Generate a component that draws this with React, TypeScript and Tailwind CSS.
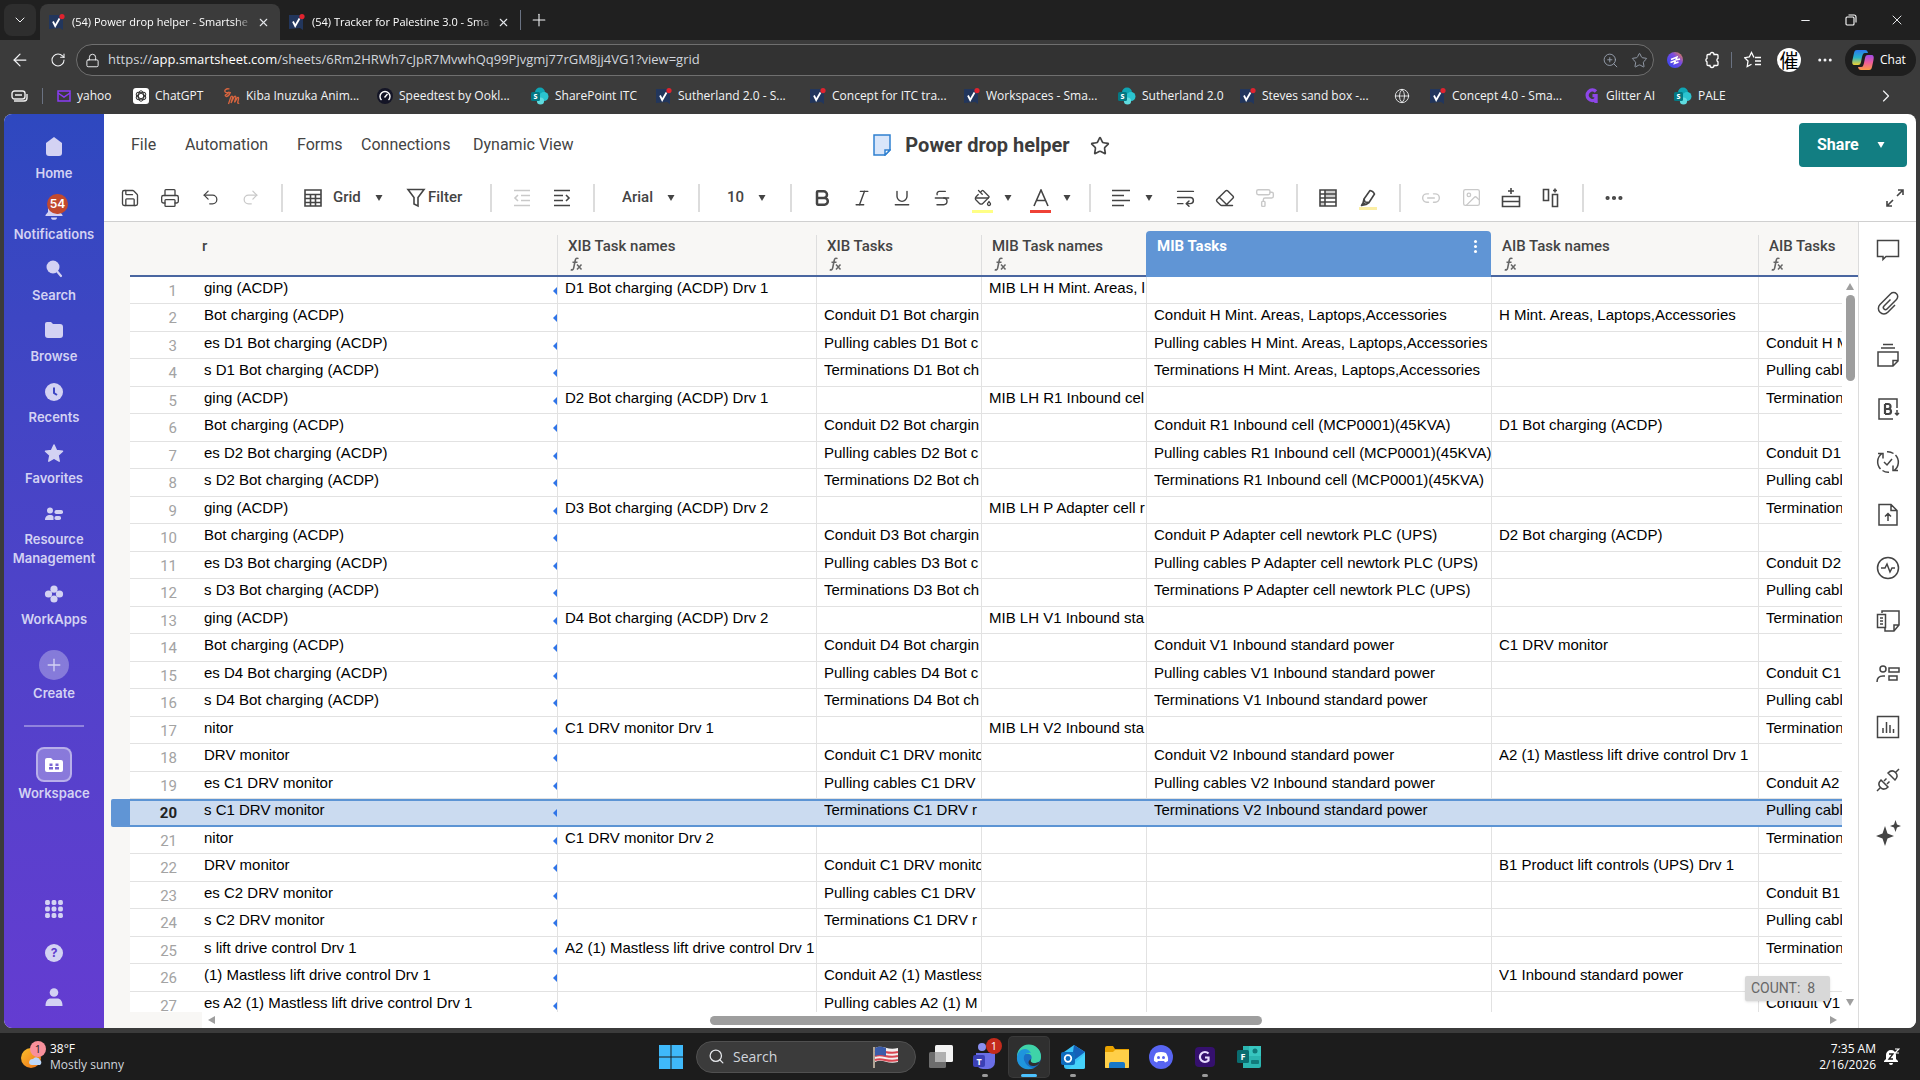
import React from 'react';
import {
  ArrowLeft,
  Bold,
  ChevronDown,
  ChevronRight,
  Ellipsis,
  Eraser,
  Globe,
  Image,
  Italic,
  Link2,
  Lock,
  Minus,
  PaintBucket,
  PaintRoller,
  Plus,
  Printer,
  Redo2,
  RotateCw,
  Save,
  Search,
  Star,
  Strikethrough,
  Underline,
  Undo2,
  WrapText,
  X,
  ZoomIn,
} from 'lucide-react';

const uiFont = "font-['Open_Sans','Noto_Sans',sans-serif]";

/* ---------- Logos ---------- */

const SmartsheetLogo: React.FC = () => (
  <svg width="16" height="16" viewBox="0 0 16 16" className="shrink-0">
    <path d="M0 1h14v15l-3-2-11 1z" fill="#22365c" />
    <path d="M4 7.500L6.200 12 10.500 4.500" fill="none" stroke="#fff" strokeWidth="1.8" />
    <circle cx="13" cy="2.6" r="2.6" fill="#e0232e" />
  </svg>
);

const SharePointLogo: React.FC = () => (
  <svg width="18" height="18" viewBox="0 0 18 18" className="shrink-0">
    <circle cx="9" cy="5.5" r="5" fill="#0fa5b4" />
    <circle cx="13" cy="9.5" r="4.5" fill="#2bc4d0" />
    <circle cx="9.5" cy="14" r="3.6" fill="#5fdce0" />
    <rect x="0" y="5" width="9" height="9" rx="1.5" fill="#047883" />
    <text x="4.5" y="12.4" fontSize="8" fontWeight="700" fill="#fff" textAnchor="middle" fontFamily="Open Sans">
      s
    </text>
  </svg>
);

const YahooLogo: React.FC = () => (
  <svg width="14" height="12" viewBox="0 0 14 12" fill="none" stroke="#8a3df5" strokeWidth="1.5" className="shrink-0">
    <path d="M1 1h12v10H1z" />
    <path d="M1 3l6 4 6-4" />
  </svg>
);

const ChatGptLogo: React.FC = () => (
  <svg width="16" height="16" viewBox="0 0 16 16" className="shrink-0">
    <rect width="16" height="16" rx="3" fill="#fff" />
    <g fill="none" stroke="#333" strokeWidth="1">
      <ellipse cx="8" cy="8" rx="2.6" ry="5.2" />
      <ellipse cx="8" cy="8" rx="2.6" ry="5.2" transform="rotate(60 8 8)" />
      <ellipse cx="8" cy="8" rx="2.6" ry="5.2" transform="rotate(120 8 8)" />
    </g>
  </svg>
);

const KibaLogo: React.FC = () => (
  <svg width="17" height="17" viewBox="0 0 17 17" fill="none" stroke="#d9653f" strokeWidth="1.3" className="shrink-0">
    <path d="M6.500 1C3 0 .5 3 2.500 4.300S7 3 5.500 4.800 1.500 6.500 2.500 8s4-.5 5-4" />
    <path d="M5.500 16l2.300-7c1.500-1.500 2.200-.5 1.700 1L8 15l3-6c1.500-1.500 2.200-.5 1.700 1L11.500 14.500 14.500 9.500c1.200-.5 1.200.5 1 1.500l-.8 3.500c0 1 .8 1 1.500.5" />
  </svg>
);

const SpeedtestLogo: React.FC = () => (
  <svg width="16" height="16" viewBox="0 0 16 16" className="shrink-0">
    <circle cx="8" cy="8" r="8" fill="#141526" />
    <path d="M4.500 12a5 5 0 1 1 7 0M7.500 9.500l3-3.500" fill="none" stroke="#fff" strokeWidth="1.400" />
  </svg>
);

const GlitterLogo: React.FC = () => (
  <svg width="16" height="18" viewBox="0 0 16 18" fill="none" stroke="#8d46e8" strokeWidth="3.400" className="shrink-0">
    <path d="M12 4.500A5.200 5.200 0 1 0 12 12V8.600H8.500M12 10v6" />
  </svg>
);

const CopilotLogo: React.FC = () => (
  <svg width="22" height="22" viewBox="0 0 22 22" className="shrink-0">
    <defs>
      <linearGradient id="cpA" x1="0" y1="0" x2="0" y2="1">
        <stop offset="0" stopColor="#2a78ee" />
        <stop offset="0.5" stopColor="#28b3c9" />
        <stop offset="1" stopColor="#f2d22e" />
      </linearGradient>
      <linearGradient id="cpB" x1="0" y1="0" x2="0" y2="1">
        <stop offset="0" stopColor="#a14be8" />
        <stop offset="0.5" stopColor="#ee5d9a" />
        <stop offset="1" stopColor="#fb9b45" />
      </linearGradient>
    </defs>
    <path d="M5 1h8c2 0 2.500 1 3 3H13c-2 0-2 1-3 4l-1 5c-.5 2-1 3-3 3H3c-3 0-3-2-2.500-5L2 4c.5-2 1-3 3-3z" fill="url(#cpA)" />
    <path d="M17 21H9c-2 0-2.500-1-3-3h3c2 0 2-1 3-4l1-5c.5-2 1-3 3-3h3c3 0 3 2 2.500 5L20 18c-.5 2-1 3-3 3z" fill="url(#cpB)" />
  </svg>
);

/* ---------- Browser chrome ---------- */

const Tab: React.FC<{ title: string; active?: boolean }> = ({ title, active }) => (
  <div className={`flex items-center h-9 w-[240px] pl-[9px] pr-[10px] rounded-t-lg ${active ? 'bg-[#3b3b3b]' : ''}`}>
    <SmartsheetLogo />
    <span className="ml-[7px] w-[184px] overflow-hidden whitespace-nowrap text-[11px] text-white mask-r-from-90%">{title}</span>
    <button aria-label="Close tab" className="ml-1 text-gray-200">
      <X size={13} strokeWidth={2} />
    </button>
  </div>
);

const bookmarks = [
  { label: 'yahoo', width: 'w-[76px]', icon: <YahooLogo /> },
  { label: 'ChatGPT', width: 'w-[90px]', icon: <ChatGptLogo /> },
  { label: 'Kiba Inuzuka Anim...', width: 'w-[154px]', icon: <KibaLogo /> },
  { label: 'Speedtest by Ookl...', width: 'w-[154px]', icon: <SpeedtestLogo /> },
  { label: 'SharePoint ITC', width: 'w-[125px]', icon: <SharePointLogo /> },
  { label: 'Sutherland 2.0 - S...', width: 'w-[154px]', icon: <SmartsheetLogo /> },
  { label: 'Concept for ITC tra...', width: 'w-[154px]', icon: <SmartsheetLogo /> },
  { label: 'Workspaces - Sma...', width: 'w-[154px]', icon: <SmartsheetLogo /> },
  { label: 'Sutherland 2.0', width: 'w-[122px]', icon: <SharePointLogo /> },
  { label: 'Steves sand box -...', width: 'w-[154px]', icon: <SmartsheetLogo /> },
  { label: '', width: 'w-[36px]', icon: <Globe size={16} strokeWidth={1.3} className="shrink-0" /> },
  { label: 'Concept 4.0 - Sma...', width: 'w-[154px]', icon: <SmartsheetLogo /> },
  { label: 'Glitter AI', width: 'w-[90px]', icon: <GlitterLogo /> },
  { label: 'PALE', width: 'w-[76px]', icon: <SharePointLogo /> },
];

const Browser: React.FC = () => (
  <header className={`text-gray-100 ${uiFont}`}>
    <div className="flex items-end h-10 bg-[#202020]">
      <button aria-label="Tab actions" className="flex items-center justify-center ml-1 mr-1 mb-1 h-8 w-8 rounded-lg bg-[#2e2e2e]">
        <ChevronDown size={16} strokeWidth={1.5} />
      </button>
      <Tab title="(54) Power drop helper - Smartshe" active />
      <Tab title="(54) Tracker for Palestine 3.0 - Sma" />
      <div className="h-5 w-px mb-[10px] bg-gray-500" />
      <button aria-label="New tab" className="ml-2 mb-[10px]">
        <Plus size={20} strokeWidth={1.3} />
      </button>
      <div className="flex ml-auto h-10">
        <button aria-label="Minimize" className="flex items-center justify-center w-[46px]">
          <Minus size={13} strokeWidth={1.8} />
        </button>
        <button aria-label="Restore" className="flex items-center justify-center w-[46px]">
          <svg width="12" height="12" viewBox="0 0 12 12" fill="none" stroke="#fff" strokeWidth="1.1">
            <rect x="1" y="3" width="8" height="8" rx="1" />
            <path d="M3.500 1H9a2 2 0 0 1 2 2v5.500" />
          </svg>
        </button>
        <button aria-label="Close" className="flex items-center justify-center w-[46px]">
          <X size={16} strokeWidth={1.4} />
        </button>
      </div>
    </div>

    <div className="flex items-end h-9">
      <button aria-label="Back" className="flex items-center justify-center w-10 h-8">
        <ArrowLeft size={20} strokeWidth={1.5} />
      </button>
      <button aria-label="Refresh" className="flex items-center justify-center w-9 h-8">
        <RotateCw size={16} strokeWidth={1.6} />
      </button>
      <div className="flex items-center flex-1 h-8 pl-2 pr-[5px] rounded-full border border-[#6f6f6f] bg-[#323232]">
        <Lock size={15} strokeWidth={1.5} />
        <p className="flex-1 ml-2 text-[13px] text-gray-300">
          https://<span className="text-white">app.smartsheet.com</span>/sheets/6Rm2HRWh7cJpR7MvwhQq99Pjvgmj77rGM8jj4VG1?view=grid
        </p>
        <ZoomIn size={17} strokeWidth={1.3} className="mr-3 text-gray-400" />
        <Star size={17} strokeWidth={1.3} className="text-gray-400" />
      </div>
      <div className="flex items-center h-8">
        <svg width="16" height="16" viewBox="0 0 16 16" className="ml-[13px]">
          <defs>
            <linearGradient id="ball" x1="0" y1="1" x2="1" y2="0">
              <stop offset="0" stopColor="#2945f5" />
              <stop offset="0.6" stopColor="#7b4be0" />
              <stop offset="1" stopColor="#f58a3b" />
            </linearGradient>
          </defs>
          <circle cx="8" cy="8" r="8" fill="url(#ball)" />
          <path d="M4 7.500l6-2.500-1 3 4-1M3.500 10.500l5-2-1 3 4-1.500" fill="none" stroke="#fff" strokeWidth="1.500" />
        </svg>
        <svg width="18" height="18" viewBox="0 0 18 18" fill="none" stroke="#fff" strokeWidth="1.300" className="ml-[20px]">
          <path d="M5 3.500h2a2 2 0 0 1 4 0h3a1 1 0 0 1 1 1v2.800a2 2 0 0 0 0 3.600v2.600a1 1 0 0 1-1 1h-3a2 2 0 0 1-4 0H5a1 1 0 0 1-1-1v-2.600a2 2 0 0 1 0-3.600V4.500a1 1 0 0 1 1-1z" />
        </svg>
        <div className="ml-[10px] h-4 w-px bg-gray-500" />
        <svg width="18" height="18" viewBox="0 0 18 18" fill="none" stroke="#fff" strokeWidth="1.300" className="ml-3">
          <path d="M10 6.500L7.500 1.500 5.300 6l-4.600.7L4 10l-.8 5.500 4.300-2.300M11 6.500h6M11 10h6M11 13.500h6" />
        </svg>
        <div className="flex items-center justify-center ml-[15px] h-6 w-6 rounded-full bg-white text-[19px] leading-6 text-black font-['Noto_Sans_CJK_SC',sans-serif]">
          催
        </div>
        <Ellipsis size={18} className="ml-[15px]" />
        <button className="flex items-center ml-[11px] mr-1 h-8 w-[71px] pl-[7px] gap-[6px] rounded-full bg-[#1e1e1e] text-xs text-white">
          <CopilotLogo />
          Chat
        </button>
      </div>
    </div>

    <nav className="flex items-center h-[38px] pt-[2px] text-xs">
      <svg width="18" height="12" viewBox="0 0 18 12" fill="none" stroke="#eee" strokeWidth="1.400" className="ml-[11px]">
        <rect x="1" y="1" width="13" height="8" rx="2.500" />
        <path d="M4 5h7M3 11h10a3 3 0 0 0 3-3V4" />
      </svg>
      <div className="ml-[13px] mr-[14px] h-4 w-px bg-gray-500" />
      {bookmarks.map((b, i) => (
        <a key={i} href="#" aria-label={b.label || 'Saved page'} className={`flex items-center gap-[6px] whitespace-nowrap ${b.width}`}>
          {b.icon}
          {b.label}
        </a>
      ))}
      <ChevronRight size={20} strokeWidth={1.4} className="ml-auto mr-6" />
    </nav>
  </header>
);

/* ---------- Left sidebar ---------- */

const NavItem: React.FC<{ label: string; children: React.ReactNode }> = ({ label, children }) => (
  <a href="#" className="flex flex-col items-center mb-[13px] text-center">
    <svg width="24" height="24" viewBox="0 0 24 24" fill="currentColor">
      {children}
    </svg>
    <span className="mt-[5px] leading-[19px]">{label}</span>
  </a>
);

const Sidebar: React.FC = () => (
  <aside className="flex flex-col w-[100px] shrink-0 pt-[21px] bg-linear-to-b from-[#2e48bf] to-[#643cd1] text-[13px] font-semibold text-[#d3d2f3] font-[Inter,sans-serif]">
    <NavItem label="Home">
      <path d="M12 2l8 6v10a3 3 0 0 1-3 3H7a3 3 0 0 1-3-3V8z" />
    </NavItem>
    <div className="relative">
      <NavItem label="Notifications">
        <path d="M12 5a6 6 0 0 1 6 6v5l2.500 3v1h-17v-1L6 16v-5a6 6 0 0 1 6-6zM9 21.500h6a3 2.300 0 0 1-6 0z" />
      </NavItem>
      <span className="absolute left-[43px] -top-[2px] flex items-center justify-center h-5 w-[21px] rounded-full bg-[#c1492e] text-xs text-white">
        54
      </span>
    </div>
    <NavItem label="Search">
      <circle cx="11" cy="10" r="6.500" />
      <path d="M14 13l5 6" stroke="currentColor" strokeWidth="2.200" strokeLinecap="round" />
    </NavItem>
    <NavItem label="Browse">
      <path d="M3 6a2 2 0 0 1 2-2h4l2 2h7a3 3 0 0 1 3 3v8a3 3 0 0 1-3 3H6a3 3 0 0 1-3-3z" />
    </NavItem>
    <NavItem label="Recents">
      <circle cx="12" cy="13" r="9" />
      <path d="M12 8.500V14l3 2" fill="none" stroke="#3d46c4" strokeWidth="2" />
    </NavItem>
    <NavItem label="Favorites">
      <path
        d="M12 5l2.500 5.500 6 .7-4.400 4.100 1.100 5.900L12 18.200l-5.200 3 1.100-5.900-4.400-4.100 6-.7z"
        stroke="currentColor"
        strokeWidth="1.500"
        strokeLinejoin="round"
      />
    </NavItem>
    <NavItem label="Resource Management">
      <circle cx="8" cy="9.500" r="3" />
      <path d="M3 19c0-3.500 2-5 5-5 2 0 3.500.6 3.500 2v3z" />
      <rect x="12.500" y="9" width="8.500" height="4" rx="1.800" />
      <rect x="12.500" y="15" width="6.500" height="4" rx="1.800" />
    </NavItem>
    <NavItem label="WorkApps">
      <circle cx="12" cy="8.200" r="3.600" />
      <circle cx="12" cy="18" r="3.600" />
      <circle cx="6.500" cy="13" r="3.600" />
      <circle cx="17.500" cy="13" r="3.600" />
    </NavItem>
    <button className="flex flex-col items-center mt-2">
      <span className="flex items-center justify-center h-[30px] w-[30px] rounded-full bg-white/30">
        <Plus size={20} strokeWidth={1.6} />
      </span>
      <span className="mt-[4px] leading-[19px]">Create</span>
    </button>
    <div className="mx-5 mt-[22px] h-[2px] bg-white/35" />
    <a href="#" className="flex flex-col items-center mt-[20px]">
      <span className="flex items-center justify-center h-[35px] w-9 rounded-lg border-2 border-white/40 bg-white/30">
        <svg width="20" height="16" viewBox="0 0 20 16">
          <path d="M1 3a2 2 0 0 1 2-2h4l2 2h8a2 2 0 0 1 2 2v8a2 2 0 0 1-2 2H3a2 2 0 0 1-2-2z" fill="#fff" />
          <path d="M5.500 6.500h3V9h-3zM11.500 6.500h3V9h-3zM5 10h4v2.500H5zM11 10h4v2.500h-4z" fill="#7a67d3" />
        </svg>
      </span>
      <span className="mt-[2px] leading-[19px]">Workspace</span>
    </a>
    <div className="flex flex-col items-center gap-5 mt-auto mb-[19px]">
      <button aria-label="Apps">
        <svg width="24" height="24" viewBox="0 0 24 24" fill="currentColor">
          {[5.5, 12, 18.5].map((y) => [5.5, 12, 18.5].map((x) => <rect key={`${x}-${y}`} x={x - 2.4} y={y - 2.4} width="4.800" height="4.800" rx="1.600" />))}
        </svg>
      </button>
      <button aria-label="Help" className="flex h-6 w-6 items-center justify-center">
        <span className="flex h-[18px] w-[18px] items-center justify-center rounded-full bg-[#d3d2f3] text-xs font-bold text-[#5f3ccd]">?</span>
      </button>
      <button aria-label="Account">
        <svg width="24" height="24" viewBox="0 0 24 24" fill="currentColor">
          <circle cx="12" cy="7.500" r="4.300" />
          <path d="M3.500 21c0-5 2-7.500 5.500-7.500h6c3.500 0 5.500 2.500 5.500 7.500z" />
        </svg>
      </button>
    </div>
  </aside>
);

/* ---------- Toolbar ---------- */

const Divider: React.FC = () => (
  <div className="flex justify-center w-[23px] shrink-0">
    <div className="h-7 w-[2px] bg-[#dcdcdc]" />
  </div>
);

const Tool: React.FC<{ label: string; disabled?: boolean; children: React.ReactNode }> = ({ label, disabled, children }) => (
  <button aria-label={label} disabled={disabled} className="flex items-center justify-center w-10 h-8 shrink-0 disabled:text-[#c9c9c9]">
    {children}
  </button>
);

const Caret: React.FC<{ className?: string }> = ({ className = '' }) => (
  <svg width="8" height="6" viewBox="0 0 8 6" fill="currentColor" className={`shrink-0 ${className}`}>
    <path d="M0.500 0h7L4 6z" />
  </svg>
);

const Svg20: React.FC<{ children: React.ReactNode }> = ({ children }) => (
  <svg width="20" height="20" viewBox="0 0 20 20" fill="none" stroke="currentColor" strokeWidth="1.600" className="shrink-0">
    {children}
  </svg>
);

const Toolbar: React.FC = () => (
  <div className="flex items-center h-[47px] pl-[6px] text-[15px] font-medium text-[#444]">
    <Tool label="Save"><Save size={20} strokeWidth={1.6} /></Tool>
    <Tool label="Print"><Printer size={20} strokeWidth={1.6} /></Tool>
    <Tool label="Undo"><Undo2 size={19} strokeWidth={1.6} /></Tool>
    <Tool label="Redo" disabled><Redo2 size={19} strokeWidth={1.6} /></Tool>
    <Divider />
    <button className="flex items-center w-[106px] h-8 pl-[10px]">
      <Svg20>
        <path d="M2 2h16v16H2zM2 6.500h16M2 10.500h16M2 14.500h16M7.500 6.500V18M12.500 6.500V18" />
      </Svg20>
      <span className="ml-[10px] w-[42px] text-left">Grid</span>
      <Caret />
    </button>
    <button className="flex items-center w-20 h-8 pl-[7px]">
      <Svg20>
        <path d="M2 1.500h16l-6 8V18l-4-2V9.500z" />
      </Svg20>
      <span className="ml-[2px]">Filter</span>
    </button>
    <Divider />
    <Tool label="Outdent" disabled>
      <Svg20><path d="M2 2.500h16M9 7.500h9M9 12.500h9M2 17.500h16M6 7L3 10l3 3" /></Svg20>
    </Tool>
    <Tool label="Indent">
      <Svg20><path d="M2 2.500h16M2 7.500h9M2 12.500h9M2 17.500h16M14 7l3 3-3 3" /></Svg20>
    </Tool>
    <Divider />
    <div className="flex items-center w-[82px]">
      <select aria-label="Font" className="appearance-none w-[62px] pl-[17px]">
        <option>Arial</option>
      </select>
      <Caret />
    </div>
    <Divider />
    <div className="flex items-center w-[69px]">
      <select aria-label="Font size" className="appearance-none w-12 pl-[17px]">
        <option>10</option>
      </select>
      <Caret />
    </div>
    <Divider />
    <Tool label="Bold"><Bold size={20} strokeWidth={3} /></Tool>
    <Tool label="Italic"><Italic size={20} strokeWidth={1.7} /></Tool>
    <Tool label="Underline"><Underline size={20} strokeWidth={1.7} /></Tool>
    <Tool label="Strikethrough"><Strikethrough size={20} strokeWidth={1.7} /></Tool>
    <button aria-label="Fill color" className="flex items-center w-[59px] h-8 pl-[10px]">
      <span className="flex flex-col items-center mt-[7px] w-[21px]">
        <PaintBucket size={18} strokeWidth={1.7} />
        <span className="mt-[3px] h-[3px] w-full bg-[#ffff85]" />
      </span>
      <Caret className="ml-[11px]" />
    </button>
    <button aria-label="Text color" className="flex items-center w-[57px] h-8 pl-[9px]">
      <span className="flex flex-col items-center mt-[7px] w-[21px]">
        <svg width="18" height="18" viewBox="0 0 18 18" fill="none" stroke="currentColor" strokeWidth="1.600">
          <path d="M2 17L9 1l7 16M4.500 11.500h9" />
        </svg>
        <span className="mt-[3px] h-[3px] w-full bg-[#ef4136]" />
      </span>
      <Caret className="ml-3" />
    </button>
    <Divider />
    <button aria-label="Align" className="flex items-center w-16 h-8 pl-[10px]">
      <Svg20><path d="M1 2.500h18M1 7.500h12M1 12.500h18M1 17.500h12" /></Svg20>
      <Caret className="ml-[14px]" />
    </button>
    <Tool label="Wrap text"><WrapText size={21} strokeWidth={1.7} /></Tool>
    <Tool label="Clear formatting"><Eraser size={20} strokeWidth={1.7} /></Tool>
    <Tool label="Format painter" disabled><PaintRoller size={20} strokeWidth={1.7} /></Tool>
    <Divider />
    <Tool label="Conditional formatting">
      <Svg20>
        <path d="M7 2h11v8H7zM2 14h5v4H2z" fill="#ccc" stroke="none" />
        <path d="M2 2h16v16H2zM2 6h16M2 10h16M2 14h16M7 2v16" />
      </Svg20>
    </Tool>
    <Tool label="Highlight changes">
      <span className="flex flex-col items-center mt-[4px] w-[18px]">
        <svg width="18" height="18" viewBox="0 0 18 18" fill="none" stroke="currentColor" strokeWidth="1.600" strokeLinejoin="round">
          <path d="M5 10l6-8.500c2 .3 3.600 1.500 4.500 3.500L10 13.500 6 13z" />
          <path d="M5 10l-1 4-1.500 2.500L7 15.500l3-2M4 14l3 1.500" />
        </svg>
        <span className="h-[3px] w-full bg-[#fbeea5]" />
      </span>
    </Tool>
    <Divider />
    <Tool label="Link" disabled><Link2 size={20} strokeWidth={1.7} /></Tool>
    <Tool label="Image" disabled><Image size={21} strokeWidth={1.5} /></Tool>
    <Tool label="Insert row">
      <Svg20><path d="M10 0v6M7 3h6M1.500 8.500h17v5h-17zM1.500 13.500h17v5h-17z" /></Svg20>
    </Tool>
    <Tool label="Insert column">
      <Svg20><path d="M2.500 1.500h5v11h-5zM11.500 6.500h5v12h-5zM14 .5v4M12 2.500h4" /></Svg20>
    </Tool>
    <Divider />
    <Tool label="More"><Ellipsis size={22} strokeWidth={2.6} /></Tool>
    <button aria-label="Expand" className="ml-auto mr-[11px]">
      <Svg20><path d="M12 8l6-6M13 2h5v5M8 12l-6 6M2 13v5h5" /></Svg20>
    </button>
  </div>
);

/* ---------- Sheet ---------- */

type Row = { primary: string; xibName?: string; xibTask?: string; mibName?: string; mibTask?: string; aibName?: string; aibTask?: string };

// values as they show with the primary column scrolled and narrow columns cut
const rows: Row[] = [
  { primary: 'ging (ACDP)', xibName: 'D1 Bot charging (ACDP) Drv 1', mibName: 'MIB LH H Mint. Areas, l' },
  { primary: 'Bot charging (ACDP)', xibTask: 'Conduit D1 Bot chargin', mibTask: 'Conduit H Mint. Areas, Laptops,Accessories', aibName: 'H Mint. Areas, Laptops,Accessories' },
  { primary: 'es D1 Bot charging (ACDP)', xibTask: 'Pulling cables D1 Bot c', mibTask: 'Pulling cables H Mint. Areas, Laptops,Accessories', aibTask: 'Conduit H M' },
  { primary: 's D1 Bot charging (ACDP)', xibTask: 'Terminations D1 Bot ch', mibTask: 'Terminations H Mint. Areas, Laptops,Accessories', aibTask: 'Pulling cable' },
  { primary: 'ging (ACDP)', xibName: 'D2 Bot charging (ACDP) Drv 1', mibName: 'MIB LH R1 Inbound cel', aibTask: 'Terminations' },
  { primary: 'Bot charging (ACDP)', xibTask: 'Conduit D2 Bot chargin', mibTask: 'Conduit R1 Inbound cell (MCP0001)(45KVA)', aibName: 'D1 Bot charging (ACDP)' },
  { primary: 'es D2 Bot charging (ACDP)', xibTask: 'Pulling cables D2 Bot c', mibTask: 'Pulling cables R1 Inbound cell (MCP0001)(45KVA)', aibTask: 'Conduit D1' },
  { primary: 's D2 Bot charging (ACDP)', xibTask: 'Terminations D2 Bot ch', mibTask: 'Terminations R1 Inbound cell (MCP0001)(45KVA)', aibTask: 'Pulling cable' },
  { primary: 'ging (ACDP)', xibName: 'D3 Bot charging (ACDP) Drv 2', mibName: 'MIB LH P Adapter cell r', aibTask: 'Terminations' },
  { primary: 'Bot charging (ACDP)', xibTask: 'Conduit D3 Bot chargin', mibTask: 'Conduit P Adapter cell newtork PLC (UPS)', aibName: 'D2 Bot charging (ACDP)' },
  { primary: 'es D3 Bot charging (ACDP)', xibTask: 'Pulling cables D3 Bot c', mibTask: 'Pulling cables P Adapter cell newtork PLC (UPS)', aibTask: 'Conduit D2' },
  { primary: 's D3 Bot charging (ACDP)', xibTask: 'Terminations D3 Bot ch', mibTask: 'Terminations P Adapter cell newtork PLC (UPS)', aibTask: 'Pulling cable' },
  { primary: 'ging (ACDP)', xibName: 'D4 Bot charging (ACDP) Drv 2', mibName: 'MIB LH V1 Inbound sta', aibTask: 'Terminations' },
  { primary: 'Bot charging (ACDP)', xibTask: 'Conduit D4 Bot chargin', mibTask: 'Conduit V1 Inbound standard power', aibName: 'C1 DRV monitor' },
  { primary: 'es D4 Bot charging (ACDP)', xibTask: 'Pulling cables D4 Bot c', mibTask: 'Pulling cables V1 Inbound standard power', aibTask: 'Conduit C1' },
  { primary: 's D4 Bot charging (ACDP)', xibTask: 'Terminations D4 Bot ch', mibTask: 'Terminations V1 Inbound standard power', aibTask: 'Pulling cable' },
  { primary: 'nitor', xibName: 'C1 DRV monitor Drv 1', mibName: 'MIB LH V2 Inbound sta', aibTask: 'Terminations' },
  { primary: 'DRV monitor', xibTask: 'Conduit C1 DRV monito', mibTask: 'Conduit V2 Inbound standard power', aibName: 'A2 (1) Mastless lift drive control Drv 1' },
  { primary: 'es C1 DRV monitor', xibTask: 'Pulling cables C1 DRV', mibTask: 'Pulling cables V2 Inbound standard power', aibTask: 'Conduit A2' },
  { primary: 's C1 DRV monitor', xibTask: 'Terminations C1 DRV r', mibTask: 'Terminations V2 Inbound standard power', aibTask: 'Pulling cable' },
  { primary: 'nitor', xibName: 'C1 DRV monitor Drv 2', aibTask: 'Terminations' },
  { primary: 'DRV monitor', xibTask: 'Conduit C1 DRV monito', aibName: 'B1 Product lift controls (UPS) Drv 1' },
  { primary: 'es C2 DRV monitor', xibTask: 'Pulling cables C1 DRV', aibTask: 'Conduit B1' },
  { primary: 's C2 DRV monitor', xibTask: 'Terminations C1 DRV r', aibTask: 'Pulling cable' },
  { primary: 's lift drive control Drv 1', xibName: 'A2 (1) Mastless lift drive control Drv 1', aibTask: 'Terminations' },
  { primary: '(1) Mastless lift drive control Drv 1', xibTask: 'Conduit A2 (1) Mastless', aibName: 'V1 Inbound standard power' },
  { primary: 'es A2 (1) Mastless lift drive control Drv 1', xibTask: 'Pulling cables A2 (1) M', aibTask: 'Conduit V1' },
];

const columns: { key: keyof Row; title: string }[] = [
  { key: 'xibName', title: 'XIB Task names' },
  { key: 'xibTask', title: 'XIB Tasks' },
  { key: 'mibName', title: 'MIB Task names' },
  { key: 'mibTask', title: 'MIB Tasks' },
  { key: 'aibName', title: 'AIB Task names' },
  { key: 'aibTask', title: 'AIB Tasks' },
];

const SELECTED_ROW = 20;
const selectedCell = 'bg-[#cbdbf0] shadow-[inset_0_2px_0_#5c94d4,inset_0_-2px_0_#5c94d4]';

const Sheet: React.FC = () => (
  <div className="relative flex flex-col flex-1 min-w-0 pl-[7px] bg-[#f8f7f5]">
    <div className="flex-1 min-h-0 overflow-hidden">
      <table className="w-full table-fixed border-separate border-spacing-0">
        <colgroup>
          <col className="w-[19px]" />
          <col className="w-[72px]" />
          <col className="w-[355px]" />
          <col className="w-[259px]" />
          <col className="w-[165px]" />
          <col className="w-[165px]" />
          <col className="w-[345px]" />
          <col className="w-[267px]" />
          <col />
        </colgroup>
        <thead>
          <tr className="h-[55px] text-left align-bottom text-[15px] font-medium text-[#444]">
            <td />
            <td className="border-b-2 border-[#4a66a0]" />
            <th className="p-0 border-b-2 border-[#4a66a0] font-medium">
              <div className="h-10 leading-[22px]">r</div>
            </th>
            {columns.map(({ key, title }) =>
              key === 'mibTask' ? (
                <th key={key} className="p-0 font-medium">
                  <div className="flex justify-between h-[46px] pl-[11px] pr-3 pt-1 leading-[22px] rounded-t-sm bg-[#6095d5] font-bold text-white">
                    {title}
                    <button aria-label="Column menu" className="flex flex-col gap-[2px] mt-[5px] mr-[2px]">
                      <span className="h-[3px] w-[3px] rounded-full bg-white" />
                      <span className="h-[3px] w-[3px] rounded-full bg-white" />
                      <span className="h-[3px] w-[3px] rounded-full bg-white" />
                    </button>
                  </div>
                </th>
              ) : (
                <th key={key} className="p-0 border-b-2 border-[#4a66a0] font-medium">
                  <div className={`h-10 leading-[22px] ${key === 'aibName' ? 'pl-[11px]' : 'pl-[10px] border-l border-[#dedede]'}`}>
                    {title}
                    <svg width="13" height="14" viewBox="0 0 13 14" fill="none" stroke="#666" className="ml-[2px]">
                      <path d="M8.500 1.700C6.800.6 5.600 1.500 5.200 3.500L3.700 10.800C3.300 12.800 2 13.300.8 12.500M2.500 5.200h5" strokeWidth="1.600" />
                      <path d="M7 7.500l4.500 5M11.500 7.500l-4.500 5" strokeWidth="1.500" />
                    </svg>
                  </div>
                </th>
              ),
            )}
          </tr>
        </thead>
        <tbody className="text-[15px] text-black font-['Liberation_Sans',Arial,sans-serif]">
          {rows.map((row, i) => {
            const n = i + 1;
            const selected = n === SELECTED_ROW;
            const height = n % 2 ? 'h-[27px]' : 'h-[28px]';
            const cell = `p-0 align-top ${selected ? selectedCell : 'border-b border-[#e2e2e2] bg-white'}`;
            return (
              <tr key={n} className={height}>
                <td className={selected ? 'rounded-l-xs bg-[#6095d5]' : ''} />
                <td className={`${cell} pt-[2px] pr-[25px] text-right leading-6 font-[Roboto,sans-serif] ${selected ? 'font-bold text-[#222]' : 'text-[#a3a3a3]'}`}>
                  {n}
                </td>
                <td className={cell}>
                  <div className="flex items-center pl-[2px] whitespace-nowrap leading-[22px]">
                    {row.primary}
                    <svg width="4" height="8" viewBox="0 0 4 8" className="ml-auto mt-[6px] shrink-0">
                      <path d="M4 0v8L0 4z" fill="#2f74e8" />
                    </svg>
                  </div>
                </td>
                {columns.map(({ key }) => (
                  <td key={key} className={`${cell} ${selected ? 'pl-2' : 'pl-[7px] border-l'}`}>
                    <div className="overflow-hidden whitespace-nowrap leading-[22px]">{row[key]}</div>
                  </td>
                ))}
              </tr>
            );
          })}
        </tbody>
      </table>
    </div>

    {/* horizontal scrollbar */}
    <div className="flex items-center h-4 ml-[91px] pl-[6px] pr-[21px] bg-white text-[#9e9e9e]">
      <svg width="7" height="8" viewBox="0 0 7 8" fill="currentColor"><path d="M7 0v8L0 4z" /></svg>
      <div className="flex flex-1 pl-[22px] pr-4">
        <div className="w-[30%] shrink-0" />
        <div className="h-[9px] w-[35%] rounded-full bg-current" />
      </div>
      <svg width="7" height="8" viewBox="0 0 7 8" fill="currentColor"><path d="M0 0v8l7-4z" /></svg>
    </div>

    {/* vertical scrollbar over the last column */}
    <div className="absolute right-0 top-[55px] bottom-4 flex flex-col items-center w-4 pt-[6px] pb-[6px] bg-white text-[#9e9e9e]">
      <svg width="8" height="7" viewBox="0 0 8 7" fill="currentColor"><path d="M0 7h8L4 0z" /></svg>
      <div className="mt-[5px] h-[86px] w-[9px] rounded-full bg-current" />
      <svg width="8" height="7" viewBox="0 0 8 7" fill="currentColor" className="mt-auto"><path d="M0 0h8L4 7z" /></svg>
    </div>

    <div className="absolute right-[28px] bottom-[27px] h-[25px] w-[85px] pl-[6px] rounded-xs bg-[#d8d8d8] text-sm leading-6 text-[#666] shadow">
      COUNT:&nbsp; 8
    </div>
  </div>
);

const Rail: React.FC = () => {
  const icons: { label: string; draw: React.ReactNode }[] = [
    { label: 'Comments', draw: <path d="M1.500 2.500h21v16H10l-3 3v-3H1.500z" /> },
    { label: 'Attachments', draw: <path d="M14.500 7.500L8 14a2 2 0 0 0 3 3l9.500-9.500a4 4 0 0 0-5.800-5.800L4 12.500a5.500 5.500 0 0 0 7.800 7.800L19 13" transform="translate(0 1)" /> },
    { label: 'Proofs', draw: <path d="M7 .5h10M5 4h14M2 8h20v9l-5 5H2zM22 16.500h-5V22" /> },
    {
      label: 'Brandfolder',
      draw: (
        <>
          <path d="M21 11V2H3v20h14M21 13v5M19 16l2 2 2-2" />
          <path d="M9 7v10M9 7h3a2.500 2.500 0 0 1 0 5H9h3.500a2.500 2.500 0 0 1 0 5H9" strokeWidth="2.200" />
        </>
      ),
    },
    { label: 'Update requests', draw: <path d="M4.500 19A10.300 10.300 0 0 1 6 3.500M2 3.500h5v5M19.500 5A10.300 10.300 0 0 1 18 20.500M22 20.500h-5v-5M11 1.800a10.300 10.300 0 0 1 6.500 1.700M13 22.200a10.300 10.300 0 0 1-6.500-1.700M8 12l3 3 5-6" /> },
    { label: 'Publish', draw: <path d="M3 1.500h12l6 6v14.500H3zM15 1.500v6h6M12 18v-7M9 13.500l3-3 3 3" /> },
    { label: 'Activity log', draw: <><circle cx="12" cy="12" r="10.500" /><path d="M5 12h4l2-4 3 8 2-4h3" /></> },
    { label: 'Summary', draw: <path d="M6 4V2h17v14l-5 6H9v-3M23 16h-5v6M1.500 5.500h8v13h-8zM4 9h3M4 12h3M4 15h3" /> },
    { label: 'Resources', draw: <><circle cx="7" cy="7" r="3" /><path d="M1 20c0-5 3-6 6-6h2M13 6h10v4H13zM13 14h8v4h-8z" /></> },
    { label: 'Charts', draw: <path d="M1.500 1.500h21v21h-21zM7 18v-5M10.500 18V7M14 18v-8M17.500 18v-4" /> },
    { label: 'Connectors', draw: <path d="M1 23l3.500-3.500M23 1l-3.500 3.500M5 12l7 7c-2.500 2.500-5 3-7.500.5S2.500 14.500 5 12zM12 5l7 7c2.500-2.500 3-5 .5-7.500S14.500 2.500 12 5zM8 13l2.500-2.500M11 16l2.500-2.500" /> },
    { label: 'AI', draw: <path d="M9 5l2.500 7.500L18 15l-6.500 2.500L9 25l-2.500-7.500L0 15l6.500-2.500zM19.500-1L21 3.500l4 1.500-4 1.500-1.500 4.500L18 6.500 14 5l4-1.500z" fill="currentColor" stroke="none" /> },
  ];
  return (
    <aside className="flex flex-col items-center gap-[29px] w-[58px] shrink-0 pt-4 border-l border-[#dcdcdc] bg-white text-[#444]">
      {icons.map(({ label, draw }) => (
        <button key={label} aria-label={label}>
          <svg width="24" height="24" viewBox="0 0 24 24" fill="none" stroke="currentColor" strokeWidth="1.500" overflow="visible">
            {draw}
          </svg>
        </button>
      ))}
    </aside>
  );
};

/* ---------- Taskbar ---------- */

const TaskIcon: React.FC<{ label: string; running?: boolean; active?: boolean; children: React.ReactNode }> = ({ label, running, active, children }) => (
  <button
    aria-label={label}
    className={`relative flex items-center justify-center h-10 w-10 mx-[2px] rounded ${active ? 'bg-[#2f2f2f] ring-1 ring-[#3a3a3a]' : ''}`}
  >
    <svg width="24" height="24" viewBox="0 0 24 24" overflow="visible">
      {children}
    </svg>
    {running && <span className="absolute bottom-0 h-[3px] w-[6px] rounded-full bg-[#9a9a9a]" />}
    {active && <span className="absolute bottom-0 h-[3px] w-4 rounded-full bg-[#4cc2ff]" />}
  </button>
);

const Taskbar: React.FC = () => (
  <footer className={`grid grid-cols-[1fr_auto_1fr] items-center h-[47px] mt-[5px] bg-[#1c1c1c] text-xs text-white ${uiFont}`}>
    <div className="flex items-center pl-5">
      <svg width="26" height="34" viewBox="0 0 26 34">
        <defs>
          <linearGradient id="sun" x1="0" y1="0" x2="1" y2="1">
            <stop offset="0" stopColor="#f8bf2c" />
            <stop offset="1" stopColor="#f07018" />
          </linearGradient>
        </defs>
        <circle cx="11" cy="18" r="10" fill="url(#sun)" />
        <path d="M9 23a4 4 0 0 1 4-4 4 4 0 0 1 7 1 3 3 0 0 1 0 5h-8a3 3 0 0 1-3-2z" fill="#bcd7fa" />
        <circle cx="18" cy="9" r="8" fill="#f8909b" />
        <text x="18" y="13" fontSize="11" textAnchor="middle" fill="#222" fontFamily="Open Sans">1</text>
      </svg>
      <div className="ml-1 leading-4">
        <p>38°F</p>
        <p className="text-gray-300">Mostly sunny</p>
      </div>
    </div>

    <div className="flex items-center">
      <TaskIcon label="Start">
        <path d="M0 0h11.500v11.500H0zM12.500 0H24v11.500H12.500zM0 12.500h11.500V24H0zM12.500 12.500H24V24H12.500z" fill="#3fb9fa" />
      </TaskIcon>
      <label className="flex items-center mx-[3px] h-8 w-[220px] pl-[11px] pr-4 rounded-full border border-[#505050] bg-[#3b3b3b]">
        <Search size={17} strokeWidth={1.8} className="text-gray-200" />
        <input aria-label="Search" placeholder="Search" className="w-[130px] ml-2 text-sm placeholder:text-gray-300 outline-none" />
        <svg width="26" height="24" viewBox="0 0 26 24" className="ml-auto">
          <path d="M1 2v21" stroke="#d9c8b4" strokeWidth="1.500" />
          <path d="M2 3c8-4 12 3 23 0v14c-11 3-15-4-23 0z" fill="#f3f0f0" />
          <path d="M2 7c8-3 12 3 23 0M2 11c8-3 12 3 23 0M2 15c8-3 12 3 23 0" fill="none" stroke="#d84550" strokeWidth="2" />
          <path d="M2 3c4-2 7-1.500 11 0v8c-4-1-7-1.500-11 0z" fill="#3b5ba9" />
        </svg>
      </label>
      <TaskIcon label="Task view">
        <rect x="0" y="7" width="17" height="16" rx="1.500" fill="#6d6d6d" />
        <rect x="6" y="0" width="18" height="17" rx="1.500" fill="#f3f3f3" />
        <path d="M6 7h11v10H6z" fill="#b0b0b0" />
      </TaskIcon>
      <TaskIcon label="Teams" running>
        <circle cx="9" cy="2" r="4" fill="#8a8ff0" />
        <path d="M3 8h19v9a7 7 0 0 1-7 7H10a7 7 0 0 1-7-7z" fill="#6a6ee6" />
        <rect x="0" y="10" width="12" height="12" rx="2" fill="#3b40b5" />
        <text x="6" y="19.500" fontSize="9" fontWeight="700" fill="#fff" textAnchor="middle" fontFamily="Open Sans">T</text>
        <circle cx="21" cy="1" r="8" fill="#c42b1c" />
        <text x="21" y="5" fontSize="11" fill="#fff" textAnchor="middle" fontFamily="Open Sans">1</text>
      </TaskIcon>
      <TaskIcon label="Edge" active>
        <circle cx="12" cy="12" r="12" fill="#1a6fc4" />
        <path d="M0 12A12 12 0 0 1 24 11c.5 5-3 7-7 7-3 0-4-1-3-3 2-4-1-7-5-6-5 0-8 2-9 3z" fill="#3fd3a8" />
        <path d="M0 12C1 4 10 1 14 8c-6-1-9 4-6 9 2 4 6 6 9 6C7 27-1 20 0 12z" fill="#1f95dc" />
        <path d="M14 14c-1 2 0 4 3 4 2 0 5-.5 6-2-1 4-4 5-7 5-5 0-6-5-2-7z" fill="#2f2f2f" />
      </TaskIcon>
      <TaskIcon label="Outlook" running>
        <path d="M3 7l10-7 11 7v15a2 2 0 0 1-2 2H6a3 3 0 0 1-3-3z" fill="#3bc3f7" />
        <path d="M13 0l11 7-12 9V7z" fill="#1560b8" />
        <path d="M24 9v13a2 2 0 0 1-2 2H7z" fill="#45d2fb" />
        <rect x="0" y="7" width="14" height="13" rx="2" fill="#0f6cbd" />
        <circle cx="7" cy="13.500" r="3.300" fill="none" stroke="#fff" strokeWidth="1.700" />
      </TaskIcon>
      <TaskIcon label="File Explorer">
        <path d="M0 3a2 2 0 0 1 2-2h6l2 3h14v18a1 1 0 0 1-1 1H1a1 1 0 0 1-1-1z" fill="#e8a200" />
        <path d="M0 7h8l2-2h14v17a1 1 0 0 1-1 1H1a1 1 0 0 1-1-1z" fill="#ffcf48" />
        <path d="M4 23v-4a2 2 0 0 1 2-2h12a2 2 0 0 1 2 2v4z" fill="#1878c8" />
      </TaskIcon>
      <TaskIcon label="Discord">
        <circle cx="12" cy="12" r="12" fill="#5865f2" />
        <path d="M7 8c3-1.500 7-1.500 10 0 1.500 2.500 2.500 5 2 8l-3 1.500-1-1.500H9l-1 1.500L5 16c-.5-3 .5-5.500 2-8z" fill="#fff" />
        <circle cx="9.500" cy="12.500" r="1.500" fill="#5865f2" />
        <circle cx="14.500" cy="12.500" r="1.500" fill="#5865f2" />
      </TaskIcon>
      <TaskIcon label="Glitter" running>
        <rect x="2" y="2" width="20" height="20" rx="4" fill="#35106e" />
        <path d="M15.500 8.500a5 5 0 1 0 0 7V12.500H12" fill="none" stroke="#e8dcff" strokeWidth="2.200" />
      </TaskIcon>
      <TaskIcon label="Forms">
        <path d="M6 1h16a2 2 0 0 1 2 2v18a2 2 0 0 1-2 2H6z" fill="#2bb5b0" />
        <path d="M12 1h12v10H12z" fill="#37c6c0" />
        <circle cx="18" cy="6" r="2.500" fill="#117a7a" />
        <rect x="14" y="15" width="8" height="4" rx="1" fill="#117a7a" />
        <rect x="0" y="5" width="12" height="13" rx="1.500" fill="#0a6c6f" />
        <text x="6" y="15" fontSize="9" fontWeight="700" fill="#fff" textAnchor="middle" fontFamily="Open Sans">F</text>
      </TaskIcon>
    </div>

    <div className="flex items-center justify-end pr-5">
      <div className="text-right leading-4">
        <p>7:35 AM</p>
        <p>2/16/2026</p>
      </div>
      <svg width="16" height="17" viewBox="0 0 16 17" className="ml-2">
        <path d="M7 2a5 5 0 0 1 5 5v4l2 2v1H0v-1l2-2V7a5 5 0 0 1 5-5zM5 15h4a2 2 0 0 1-4 0z" fill="#fff" />
        <path d="M5 6h4l-4 5h4" fill="none" stroke="#1c1c1c" strokeWidth="1.300" />
        <path d="M11 1h4l-4 4h4" fill="none" stroke="#fff" strokeWidth="1.200" />
      </svg>
    </div>
  </footer>
);

/* ---------- Page ---------- */

const App: React.FC = () => (
  <div className="flex flex-col h-screen overflow-hidden bg-[#3b3b3b]">
    <Browser />
    <div className="flex flex-1 min-h-0 mx-1 rounded-lg overflow-hidden bg-white">
      <Sidebar />
      <main className="flex flex-col flex-1 min-w-0 font-[Roboto,sans-serif]">
        <div className="grid grid-cols-[1fr_auto_1fr] items-start h-[60px] pt-[9px] pr-[9px]">
          <nav className="flex items-center h-11 pl-[27px] text-base text-[#444]">
            <a href="#" className="w-[54px]">File</a>
            <a href="#" className="w-[112px]">Automation</a>
            <a href="#" className="w-16">Forms</a>
            <a href="#" className="w-[112px]">Connections</a>
            <a href="#">Dynamic View</a>
          </nav>
          <div className="flex items-center h-11 pr-7">
            <svg width="18" height="22" viewBox="0 0 18 22" fill="#d9e6fa" stroke="#2f80d0" strokeWidth="1.500">
              <path d="M1 1h16v15l-5 5H1z" />
              <path d="M17 16h-5v5z" fill="#fff" />
            </svg>
            <h1 className="ml-[14px] text-xl font-bold text-[#3c3c3c]">Power drop helper</h1>
            <Star size={20} strokeWidth={2} className="ml-[20px] mt-[2px] text-[#444]" />
          </div>
          <button className="flex items-center justify-self-end w-[108px] h-11 pl-[18px] rounded bg-[#127e82] text-base font-bold text-white">
            Share
            <Caret className="ml-auto mr-[22px]" />
          </button>
        </div>
        <Toolbar />
        <div className="flex flex-1 min-h-0 border-t border-[#d0d0d0]">
          <Sheet />
          <Rail />
        </div>
      </main>
    </div>
    <Taskbar />
  </div>
);

export default App;
